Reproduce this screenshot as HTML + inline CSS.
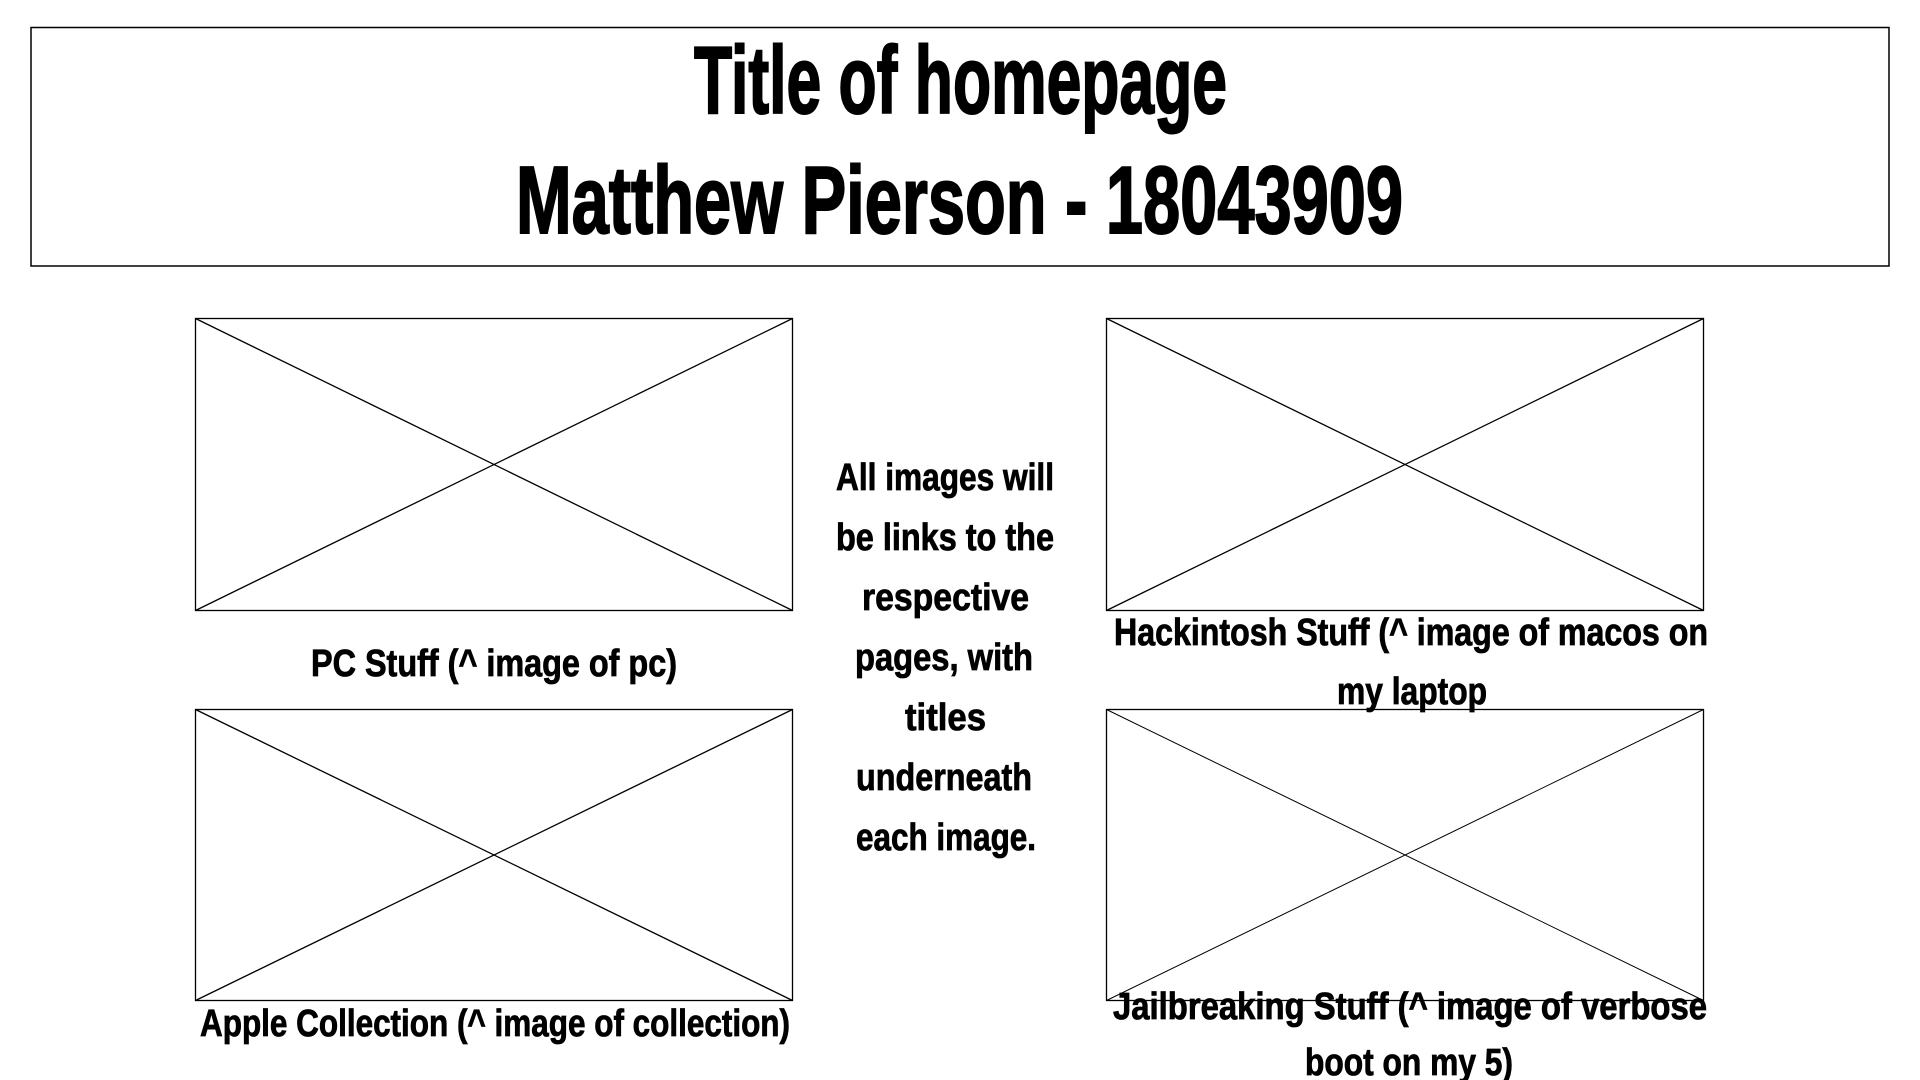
<!DOCTYPE html>
<html><head><meta charset="utf-8"><style>
html,body{margin:0;padding:0;background:#fff;width:1920px;height:1080px;overflow:hidden}
svg{display:block}
text{font-family:"Liberation Sans",sans-serif;font-weight:bold;fill:#000;stroke:#000}
</style></head><body>
<svg width="1920" height="1080" viewBox="0 0 1920 1080" xmlns="http://www.w3.org/2000/svg">
<rect x="31" y="27.5" width="1858" height="238.5" fill="none" stroke="#000" stroke-width="1.5"/>
<g stroke-width="2">
<text x="694" y="113" font-size="96" textLength="533" lengthAdjust="spacingAndGlyphs">Title of homepage</text>
<text x="516" y="233" font-size="96" textLength="887" lengthAdjust="spacingAndGlyphs">Matthew Pierson - 18043909</text>
</g>

<g fill="none" stroke="#000" stroke-width="1.3">
<rect x="195.5" y="318.5" width="597" height="292"/><line x1="195.5" y1="318.5" x2="792.5" y2="610.5"/><line x1="792.5" y1="318.5" x2="195.5" y2="610.5"/>
<rect x="1106.5" y="318.5" width="597" height="292"/><line x1="1106.5" y1="318.5" x2="1703.5" y2="610.5"/><line x1="1703.5" y1="318.5" x2="1106.5" y2="610.5"/>
<rect x="195.5" y="709.5" width="597" height="291"/><line x1="195.5" y1="709.5" x2="792.5" y2="1000.5"/><line x1="792.5" y1="709.5" x2="195.5" y2="1000.5"/>
<rect x="1106.5" y="709.5" width="597" height="291"/><line x1="1106.5" y1="709.5" x2="1703.5" y2="1000.5" stroke-width="1"/><line x1="1703.5" y1="709.5" x2="1106.5" y2="1000.5" stroke-width="1"/>
</g>

<g font-size="38" stroke-width="0.8">
<text x="311" y="676" textLength="366" lengthAdjust="spacingAndGlyphs">PC Stuff (^ image of pc)</text>
<text x="1114" y="645" textLength="594" lengthAdjust="spacingAndGlyphs">Hackintosh Stuff (^ image of macos on</text>
<text x="1337" y="704" textLength="150" lengthAdjust="spacingAndGlyphs">my laptop</text>
<text x="200" y="1036" textLength="590" lengthAdjust="spacingAndGlyphs">Apple Collection (^ image of collection)</text>
<text x="1113" y="1019" textLength="594" lengthAdjust="spacingAndGlyphs">Jailbreaking Stuff (^ image of verbose</text>
<text x="1305" y="1075" textLength="208" lengthAdjust="spacingAndGlyphs">boot on my 5)</text>

<text x="836" y="490" textLength="218" lengthAdjust="spacingAndGlyphs">All images will</text>
<text x="836" y="550" textLength="218" lengthAdjust="spacingAndGlyphs">be links to the</text>
<text x="862" y="610" textLength="167" lengthAdjust="spacingAndGlyphs">respective</text>
<text x="855" y="670" textLength="178" lengthAdjust="spacingAndGlyphs">pages, with</text>
<text x="905" y="730" textLength="81" lengthAdjust="spacingAndGlyphs">titles</text>
<text x="856" y="790" textLength="176" lengthAdjust="spacingAndGlyphs">underneath</text>
<text x="856" y="850" textLength="180" lengthAdjust="spacingAndGlyphs">each image.</text>
</g>
</svg>
</body></html>
